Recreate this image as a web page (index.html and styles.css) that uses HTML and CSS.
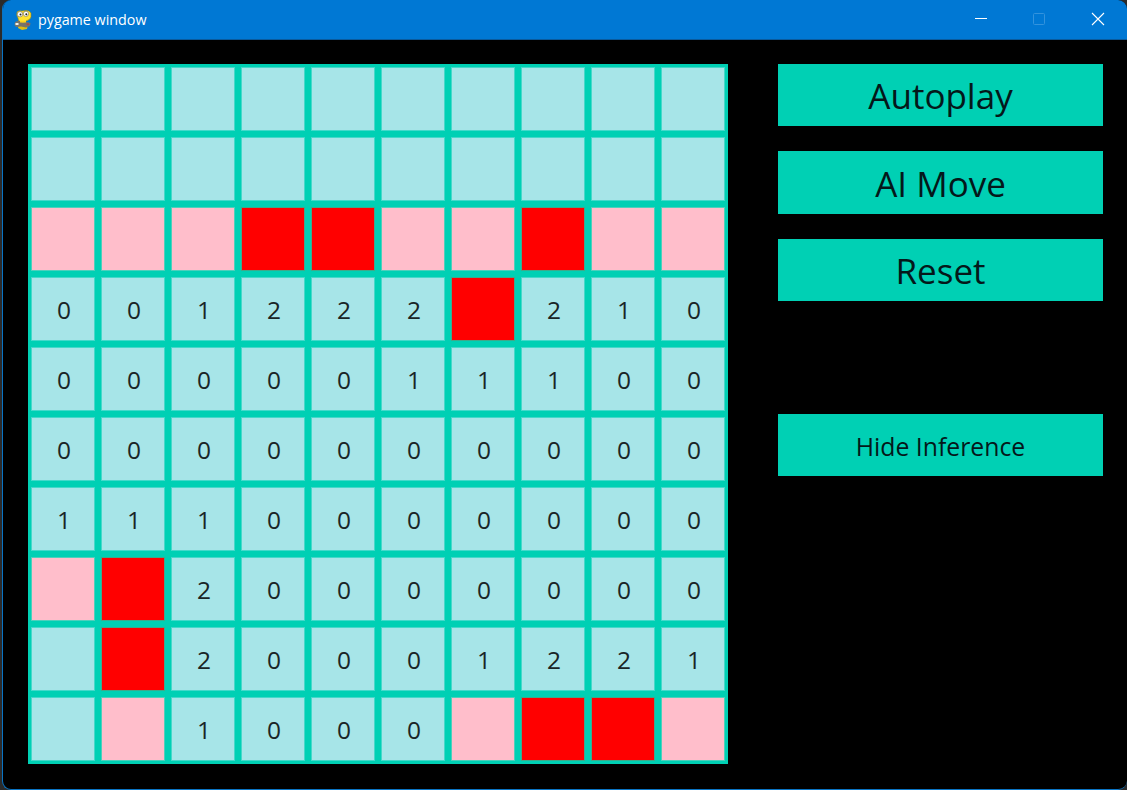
FILE: index.html
```html
<!DOCTYPE html>
<html lang="en">
<head>
<meta charset="utf-8">
<title>pygame window</title>
<link rel="stylesheet" href="styles.css">
</head>
<body>
<div class="window">
  <header class="titlebar">
    <svg class="app-icon" width="18" height="20" viewBox="0 0 18 20">
      <path d="M5 14 L4 18 L8 20 L13 19 L14 14 Z" fill="#e2bd12"/>
      <path d="M3 2 Q5 0 8 1 L12 0.5 Q15 0 17 3 L17 7 Q16 10 12 11 L11 13 L6 13 Q4 11 4 8 Q2 5 3 2 Z" fill="#ffe22e" stroke="#9a8412" stroke-width=".6"/>
      <path d="M1 12 L5 10.5 L8 12.5 L13 12 L16.5 13 L16 16 L12 17.5 L7 16.5 L2 17 L0.5 15 Z" fill="#77746a"/>
      <path d="M1.5 13h3v2h-3z" fill="#f2f2ea"/>
      <path d="M12.5 13.5h2.5v1.6h-2.5z" fill="#b5483f"/>
      <path d="M6 11h6v1.6H6z" fill="#ffd21e"/>
      <circle cx="6" cy="4.2" r="2.7" fill="#fff" stroke="#6b6550" stroke-width=".6"/>
      <circle cx="12" cy="3.8" r="2.6" fill="#fff" stroke="#6b6550" stroke-width=".6"/>
      <circle cx="6.5" cy="4.6" r="1" fill="#222"/>
      <circle cx="12.3" cy="4.2" r="1" fill="#222"/>
    </svg>
    <span class="title">pygame window</span>
    <div class="controls">
      <span class="ctl"><svg width="14" height="14" viewBox="0 0 14 14"><path d="M1 6.5h12" stroke="#fff" stroke-width="1"/></svg></span>
      <span class="ctl"><svg width="14" height="14" viewBox="0 0 14 14"><rect x="1.5" y="1.5" width="11" height="11" rx="1" fill="none" stroke="#3393dd" stroke-width="1"/></svg></span>
      <span class="ctl"><svg width="14" height="14" viewBox="0 0 14 14"><path d="M1 1l12 12M13 1L1 13" stroke="#fff" stroke-width="1.1"/></svg></span>
    </div>
  </header>
  <main class="client">
    <section class="board">
      <div class="cell">&nbsp;</div><div class="cell">&nbsp;</div><div class="cell">&nbsp;</div><div class="cell">&nbsp;</div><div class="cell">&nbsp;</div><div class="cell">&nbsp;</div><div class="cell">&nbsp;</div><div class="cell">&nbsp;</div><div class="cell">&nbsp;</div><div class="cell">&nbsp;</div>
      <div class="cell">&nbsp;</div><div class="cell">&nbsp;</div><div class="cell">&nbsp;</div><div class="cell">&nbsp;</div><div class="cell">&nbsp;</div><div class="cell">&nbsp;</div><div class="cell">&nbsp;</div><div class="cell">&nbsp;</div><div class="cell">&nbsp;</div><div class="cell">&nbsp;</div>
      <div class="cell safe"></div><div class="cell safe"></div><div class="cell safe"></div><div class="cell mine"></div><div class="cell mine"></div><div class="cell safe"></div><div class="cell safe"></div><div class="cell mine"></div><div class="cell safe"></div><div class="cell safe"></div>
      <div class="cell">0</div><div class="cell">0</div><div class="cell">1</div><div class="cell">2</div><div class="cell">2</div><div class="cell">2</div><div class="cell mine"></div><div class="cell">2</div><div class="cell">1</div><div class="cell">0</div>
      <div class="cell">0</div><div class="cell">0</div><div class="cell">0</div><div class="cell">0</div><div class="cell">0</div><div class="cell">1</div><div class="cell">1</div><div class="cell">1</div><div class="cell">0</div><div class="cell">0</div>
      <div class="cell">0</div><div class="cell">0</div><div class="cell">0</div><div class="cell">0</div><div class="cell">0</div><div class="cell">0</div><div class="cell">0</div><div class="cell">0</div><div class="cell">0</div><div class="cell">0</div>
      <div class="cell">1</div><div class="cell">1</div><div class="cell">1</div><div class="cell">0</div><div class="cell">0</div><div class="cell">0</div><div class="cell">0</div><div class="cell">0</div><div class="cell">0</div><div class="cell">0</div>
      <div class="cell safe"></div><div class="cell mine"></div><div class="cell">2</div><div class="cell">0</div><div class="cell">0</div><div class="cell">0</div><div class="cell">0</div><div class="cell">0</div><div class="cell">0</div><div class="cell">0</div>
      <div class="cell">&nbsp;</div><div class="cell mine"></div><div class="cell">2</div><div class="cell">0</div><div class="cell">0</div><div class="cell">0</div><div class="cell">1</div><div class="cell">2</div><div class="cell">2</div><div class="cell">1</div>
      <div class="cell">&nbsp;</div><div class="cell safe"></div><div class="cell">1</div><div class="cell">0</div><div class="cell">0</div><div class="cell">0</div><div class="cell safe"></div><div class="cell mine"></div><div class="cell mine"></div><div class="cell safe"></div>
    </section>
    <aside class="panel">
      <div class="btn">Autoplay</div>
      <div class="btn">AI Move</div>
      <div class="btn">Reset</div>
      <div class="btn btn-small">Hide Inference</div>
    </aside>
  </main>
</div>
</body>
</html>
```

FILE: styles.css
```css
* { box-sizing: border-box; }
html, body { margin: 0; height: 100%; overflow: hidden; }
body { background: #2b2b2b; width: 1127px; height: 790px; }
.window {
  margin-left: 2px;
  width: 1125px;
  height: 790px;
  background: #000;
  border-left: 1px solid #0a74c4;
  border-bottom: 1px solid #0a74c4;
  border-radius: 9px;
  overflow: hidden;
  display: flex;
  flex-direction: column;
}
.titlebar {
  height: 40px;
  flex: none;
  background: #0078d4;
  border-bottom: 1px solid #0a5a9c;
  display: flex;
  align-items: center;
  padding-left: 11px;
  color: #fff;
  font: 14.3px "Open Sans", "Noto Sans", sans-serif;
}
.app-icon { margin-right: 6px; flex: none; }
.title { flex: 1; }
.controls { display: flex; margin-right: 0; }
.ctl { width: 58.5px; display: flex; justify-content: center; align-items: center; margin-bottom: 1px; }
.client {
  flex: 1;
  display: flex;
  align-items: flex-start;
  padding: 24px 0 0 25px;
  gap: 50px;
}
.board {
  width: 700px;
  height: 700px;
  padding: 3px;
  background: #00d0b4;
  display: grid;
  grid-template-columns: repeat(10, 64px);
  grid-auto-rows: 64px;
  gap: 6px;
}
.cell {
  background: #a7e5e8;
  border: 1px solid #45d8ca;
  padding-left: 2px;
  display: flex;
  align-items: center;
  justify-content: center;
  color: #1a2426;
  font: 24.5px "Open Sans", "Noto Sans", sans-serif;
}
.safe { background: #ffbecb; border-color: #4fcfbc; }
.mine { background: #ff0000; border-color: #40a88a; }
.panel { width: 325px; display: flex; flex-direction: column; gap: 25px; }
.btn {
  height: 62.3px;
  padding-top: 1.2px;
  background: #00d0b4;
  display: flex;
  align-items: center;
  justify-content: center;
  color: #04181a;
  font: 35px "Open Sans", "Noto Sans", sans-serif;
}
.btn-small { font-size: 24.8px; margin-top: 88.1px; }
```
